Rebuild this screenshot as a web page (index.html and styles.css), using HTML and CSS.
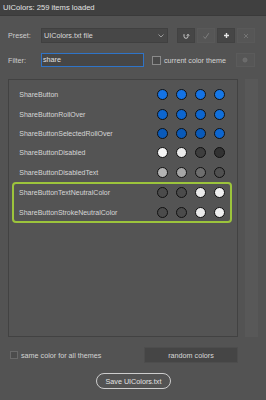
FILE: index.html
```html
<!DOCTYPE html>
<html>
<head>
<meta charset="utf-8">
<link rel="stylesheet" href="styles.css">
</head>
<body>
<div class="titlebar">UIColors: 259 items loaded</div>
<div class="content">
  <div class="row-ctl preset-row">
    <span class="label">Preset:</span>
    <div class="select">
      <span>UIColors.txt file</span>
      <svg class="chev" width="6" height="4" viewBox="0 0 6 4"><polyline points="0.5,0.5 3,3 5.5,0.5" fill="none" stroke="#9a9a9a" stroke-width="1"/></svg>
    </div>
    <div class="btns">
      <div class="ibtn dark"><svg width="8" height="8" viewBox="0 0 8 8"><path d="M2 2.2 V4.3 A2 2 0 0 0 6 4.3 V2.6" fill="none" stroke="#c8c8c8" stroke-width="1"/><polyline points="4.8,3.6 6,2.3 7.2,3.6" fill="none" stroke="#c8c8c8" stroke-width="1"/></svg></div>
      <div class="ibtn light"><svg width="8" height="8" viewBox="0 0 8 8"><polyline points="1.5,4.5 3.2,6.5 6.8,1.2" fill="none" stroke="#7e7e7e" stroke-width="1"/></svg></div>
      <div class="ibtn dark"><svg width="7" height="7" viewBox="0 0 7 7"><path d="M3.5 1 V6 M1 3.5 H6" stroke="#e6e6e6" stroke-width="1.4"/></svg></div>
      <div class="ibtn light"><svg width="6" height="6" viewBox="0 0 6 6"><path d="M1 1 L5 5 M5 1 L1 5" stroke="#747474" stroke-width="1"/></svg></div>
    </div>
  </div>
  <div class="row-ctl filter-row">
    <span class="label">Filter:</span>
    <div class="input">share</div>
    <div class="check-wrap">
      <span class="checkbox"></span>
      <span class="check-text">current color theme</span>
    </div>
    <div class="gbtn"><svg width="6" height="6" viewBox="0 0 6 6"><circle cx="3" cy="3" r="2" fill="#6a6a6a" stroke="#707070" stroke-width="1"/></svg></div>
  </div>
  <div class="list-area">
    <div class="panel">
      <div class="item"><span class="name">ShareButton</span><span class="dots"><i style="background:#1473e6"></i><i style="background:#1473e6"></i><i style="background:#1473e6"></i><i style="background:#1678e8"></i></span></div>
      <div class="item"><span class="name">ShareButtonRollOver</span><span class="dots"><i style="background:#0d66d0"></i><i style="background:#0d66d0"></i><i style="background:#0d66d0"></i><i style="background:#1170dc"></i></span></div>
      <div class="item"><span class="name">ShareButtonSelectedRollOver</span><span class="dots"><i style="background:#095aba"></i><i style="background:#095aba"></i><i style="background:#095aba"></i><i style="background:#0d66d0"></i></span></div>
      <div class="item"><span class="name">ShareButtonDisabled</span><span class="dots"><i style="background:#f5f5f5"></i><i style="background:#eaeaea"></i><i style="background:#3e3e3e"></i><i style="background:#323232"></i></span></div>
      <div class="item"><span class="name">ShareButtonDisabledText</span><span class="dots"><i style="background:#b3b3b3"></i><i style="background:#a6a6a6"></i><i style="background:#6e6e6e"></i><i style="background:#505050"></i></span></div>
      <div class="group">
        <div class="item"><span class="name">ShareButtonTextNeutralColor</span><span class="dots"><i style="background:#4b4b4b"></i><i style="background:#4b4b4b"></i><i style="background:#eaeaea"></i><i style="background:#f0f0f0"></i></span></div>
        <div class="item"><span class="name">ShareButtonStrokeNeutralColor</span><span class="dots"><i style="background:#4b4b4b"></i><i style="background:#4b4b4b"></i><i style="background:#eaeaea"></i><i style="background:#f0f0f0"></i></span></div>
      </div>
    </div>
    <div class="strip"></div>
  </div>
  <div class="bottom-row">
    <div class="check-wrap">
      <span class="checkbox small"></span>
      <span class="check-text">same color for all themes</span>
    </div>
    <div class="rbtn">random colors</div>
  </div>
  <div class="save-row">
    <div class="save">Save UIColors.txt</div>
  </div>
</div>
</body>
</html>
```

FILE: styles.css
```css
html, body {
  margin: 0;
  padding: 0;
}
body {
  width: 266px;
  height: 400px;
  background: #535353;
  font-family: "Liberation Sans", Arial, sans-serif;
  color: #d2d2d2;
  overflow: hidden;
}
.titlebar {
  height: 16px;
  line-height: 15px;
  background: #404040;
  border-bottom: 1px solid #3a3a3a;
  box-sizing: border-box;
  padding-left: 3px;
  font-size: 7.6px;
  color: #e2e2e2;
}
.content {
  padding: 12px 0 0 8px;
}
.row-ctl {
  display: flex;
  align-items: center;
  height: 15px;
  font-size: 7.2px;
}
.label {
  width: 33px;
  color: #cfcfcf;
}
.select {
  width: 127px;
  height: 15px;
  box-sizing: border-box;
  background: #474747;
  border: 1px solid #404040;
  display: flex;
  align-items: center;
  justify-content: space-between;
  padding: 0 3px 0 2px;
  color: #dadada;
}
.chev {
  display: block;
}
.btns {
  display: flex;
  gap: 2px;
  margin-left: 9px;
}
.ibtn {
  width: 18px;
  height: 15px;
  box-sizing: border-box;
  display: flex;
  align-items: center;
  justify-content: center;
}
.ibtn.dark {
  background: #464646;
  border: 1px solid #424242;
}
.ibtn.light {
  background: #565656;
  border: 1px solid #595959;
}
.filter-row {
  margin-top: 10px;
  height: 14px;
}
.input {
  width: 103px;
  height: 14px;
  box-sizing: border-box;
  background: #464646;
  border: 1px solid #2f74c8;
  padding-left: 1px;
  line-height: 11px;
  color: #e0e0e0;
}
.check-wrap {
  display: flex;
  align-items: center;
}
.filter-row .check-wrap {
  margin-left: 8px;
}
.checkbox {
  width: 9px;
  height: 9px;
  box-sizing: border-box;
  border: 1px solid #8a8a8a;
  background: #4a4a4a;
  margin-right: 3px;
}
.checkbox.small {
  width: 8px;
  height: 8px;
  border-color: #6a6a6a;
  background: #4c4c4c;
}
.check-text {
  color: #d4d4d4;
}
.gbtn {
  width: 19px;
  height: 14px;
  box-sizing: border-box;
  margin-left: 10px;
  background: #565656;
  border: 1px solid #5b5b5b;
  display: flex;
  align-items: center;
  justify-content: center;
}
.list-area {
  display: flex;
  gap: 7px;
  margin-top: 12px;
  height: 258px;
}
.panel {
  width: 230px;
  box-sizing: border-box;
  border: 1px solid #424242;
  background: #545454;
  padding-top: 5px;
}
.strip {
  width: 13px;
  background: #585858;
}
.item {
  height: 19.4px;
  display: flex;
  align-items: center;
  justify-content: space-between;
  padding: 0 11.6px 0 10.3px;
  font-size: 7px;
  color: #d6d6d6;
}
.dots {
  display: flex;
  gap: 8.3px;
}
.dots i {
  display: block;
  width: 11px;
  height: 11px;
  box-sizing: border-box;
  border-radius: 50%;
  border: 1px solid #111111;
}
.group {
  margin: 0 5px 0 3px;
  border: 2px solid #9cc43c;
  border-radius: 4px;
  display: flex;
  flex-direction: column;
  gap: 2.2px;
}
.group .item {
  height: 17.5px;
  padding: 0 4.6px 0 5px;
}
.bottom-row {
  display: flex;
  align-items: center;
  justify-content: space-between;
  width: 230px;
  margin-top: 10px;
  font-size: 7.2px;
}
.bottom-row .check-wrap {
  margin-left: 2px;
}
.rbtn {
  width: 94px;
  height: 16px;
  box-sizing: border-box;
  background: #454545;
  border: 1px solid #4d4d4d;
  display: flex;
  align-items: center;
  justify-content: center;
  color: #d8d8d8;
}
.save-row {
  display: flex;
  margin-top: 10px;
  padding-left: 88px;
}
.save {
  width: 75px;
  height: 16px;
  box-sizing: border-box;
  border: 1px solid #cdcdcd;
  border-radius: 8px;
  display: flex;
  align-items: center;
  justify-content: center;
  font-size: 7.2px;
  color: #e2e2e2;
}
```
